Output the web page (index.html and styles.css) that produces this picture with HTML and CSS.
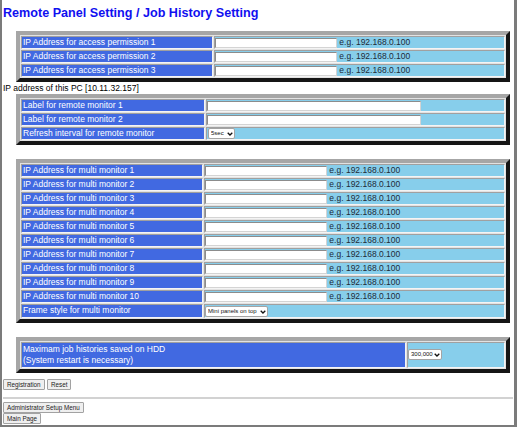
FILE: index.html
```html
<!DOCTYPE html>
<html lang="en">

<head>
    <meta charset="UTF-8">
    <meta name="viewport" content="width=device-width, initial-scale=1.0">
    <title>Remote Panel Setting / Job History Setting</title>
    <link rel="stylesheet" href="styles.css">
</head>

<body>
    <div class="page">
        <h1 class="title">Remote Panel Setting / Job History Setting</h1>

        <form>
            <table class="setting first">
                <tr>
                    <td class="label w1">IP Address for access permission 1</td>
                    <td class="value"><input class="ip" type="text"> e.g. 192.168.0.100</td>
                </tr>
                <tr>
                    <td class="label w1">IP Address for access permission 2</td>
                    <td class="value"><input class="ip" type="text"> e.g. 192.168.0.100</td>
                </tr>
                <tr>
                    <td class="label w1">IP Address for access permission 3</td>
                    <td class="value"><input class="ip" type="text"> e.g. 192.168.0.100</td>
                </tr>
            </table>

            <div class="pcInfo">IP address of this PC [10.11.32.157]</div>

            <table class="setting">
                <tr>
                    <td class="label w2">Label for remote monitor 1</td>
                    <td class="value"><input class="ip wide" type="text"></td>
                </tr>
                <tr>
                    <td class="label w2">Label for remote monitor 2</td>
                    <td class="value"><input class="ip wide" type="text"></td>
                </tr>
                <tr>
                    <td class="label w2">Refresh interval for remote monitor</td>
                    <td class="value">
                        <span class="selWrap secWrap">
                            <select class="sel secSel">
                                <option>5sec</option>
                                <option>10sec</option>
                                <option>30sec</option>
                            </select>
                            <svg class="selArrow" width="6" height="4" viewBox="0 0 6 4"><path d="M0.7 0.7 L3 3 L5.3 0.7" fill="none" stroke="#111" stroke-width="1.3"/></svg>
                        </span>
                    </td>
                </tr>
            </table>

            <table class="setting spaced">
                <tr>
                    <td class="label w3">IP Address for multi monitor 1</td>
                    <td class="value"><input class="ip" type="text"> e.g. 192.168.0.100</td>
                </tr>
                <tr>
                    <td class="label w3">IP Address for multi monitor 2</td>
                    <td class="value"><input class="ip" type="text"> e.g. 192.168.0.100</td>
                </tr>
                <tr>
                    <td class="label w3">IP Address for multi monitor 3</td>
                    <td class="value"><input class="ip" type="text"> e.g. 192.168.0.100</td>
                </tr>
                <tr>
                    <td class="label w3">IP Address for multi monitor 4</td>
                    <td class="value"><input class="ip" type="text"> e.g. 192.168.0.100</td>
                </tr>
                <tr>
                    <td class="label w3">IP Address for multi monitor 5</td>
                    <td class="value"><input class="ip" type="text"> e.g. 192.168.0.100</td>
                </tr>
                <tr>
                    <td class="label w3">IP Address for multi monitor 6</td>
                    <td class="value"><input class="ip" type="text"> e.g. 192.168.0.100</td>
                </tr>
                <tr>
                    <td class="label w3">IP Address for multi monitor 7</td>
                    <td class="value"><input class="ip" type="text"> e.g. 192.168.0.100</td>
                </tr>
                <tr>
                    <td class="label w3">IP Address for multi monitor 8</td>
                    <td class="value"><input class="ip" type="text"> e.g. 192.168.0.100</td>
                </tr>
                <tr>
                    <td class="label w3">IP Address for multi monitor 9</td>
                    <td class="value"><input class="ip" type="text"> e.g. 192.168.0.100</td>
                </tr>
                <tr>
                    <td class="label w3">IP Address for multi monitor 10</td>
                    <td class="value"><input class="ip" type="text"> e.g. 192.168.0.100</td>
                </tr>
                <tr>
                    <td class="label w3">Frame style for multi monitor</td>
                    <td class="value">
                        <span class="selWrap">
                            <select class="sel frameSel">
                                <option>Mini panels on top</option>
                                <option>Mini panels on left</option>
                            </select>
                            <svg class="selArrow" width="6" height="4" viewBox="0 0 6 4"><path d="M0.7 0.7 L3 3 L5.3 0.7" fill="none" stroke="#111" stroke-width="1.3"/></svg>
                        </span>
                    </td>
                </tr>
            </table>

            <table class="setting spaced">
                <tr>
                    <td class="label w4 tall">Maximam job histories saved on HDD<br>(System restart is necessary)</td>
                    <td class="value">
                        <span class="selWrap">
                            <select class="sel histSel">
                                <option>300,000</option>
                                <option>100,000</option>
                            </select>
                            <svg class="selArrow" width="6" height="4" viewBox="0 0 6 4"><path d="M0.7 0.7 L3 3 L5.3 0.7" fill="none" stroke="#111" stroke-width="1.3"/></svg>
                        </span>
                    </td>
                </tr>
            </table>

            <div class="actions">
                <button class="btn" type="button">Registration</button>
                <button class="btn" type="reset">Reset</button>
            </div>
        </form>

        <hr class="rule">

        <div class="nav">
            <button class="btn" type="button">Administrator Setup Menu</button>
        </div>
        <div class="nav">
            <button class="btn" type="button">Main Page</button>
        </div>
    </div>
</body>

</html>
```

FILE: styles.css
```css
* {
    margin: 0;
    padding: 0;
    box-sizing: border-box;
}

html,
body {
    width: 100%;
    height: 100%;
    overflow: hidden;
}

body {
    font-family: "Liberation Sans", Arial, sans-serif;
    font-size: 8.5px;
    color: #000;
    background-color: #fff;
}

.page {
    height: 427px;
    padding: 0 1px;
    border-left: 2px solid #7b7b7b;
    border-right: 3px solid #7b7b7b;
    border-bottom: 2px solid #7b7b7b;
}

.title {
    padding-top: 6px;
    font-size: 12.6px;
    line-height: 14px;
    font-weight: bold;
    color: #1010f0;
}

.setting {
    width: 494px;
    margin-left: 13px;
    border-style: solid;
    border-width: 4px;
    border-color: #a6a6a6 #151515 #151515 #a6a6a6;
    border-spacing: 1px;
    background-color: #e2e2e2;
}

.first {
    margin-top: 11px;
}

.spaced {
    margin-top: 14px;
}

.setting td {
    height: 13px;
    padding: 0 1px;
    line-height: 11px;
    border: 1px solid;
    border-color: #a0a0a0 #f4f4f4 #f4f4f4 #a0a0a0;
    white-space: nowrap;
}

.label {
    background-color: #4169e1;
    color: #fff;
}

.value {
    background-color: #87ceeb;
    color: #1e2b38;
}

.setting td.value {
    padding: 0;
}

.w1 {
    width: 192px;
}

.w2 {
    width: 184px;
}

.w3 {
    width: 182px;
}

.w4 {
    width: 385px;
}

.setting td.tall {
    height: 26px;
    padding: 1px;
    white-space: normal;
}

.pcInfo {
    line-height: 12px;
}

.ip {
    width: 122px;
    height: 10px;
    padding: 0 1px;
    font-size: 7px;
    vertical-align: middle;
    background-color: #fff;
    border: 1px solid;
    border-color: #8c8c8c #d4d4d4 #d4d4d4 #8c8c8c;
}

.wide {
    width: 214px;
}

.selWrap {
    position: relative;
    display: inline-block;
    vertical-align: middle;
    line-height: 0;
}

.secWrap {
    margin-left: 1px;
}

.sel {
    appearance: none;
    -webkit-appearance: none;
    height: 11px;
    padding: 0 8px 0 2px;
    font-family: "Liberation Sans", Arial, sans-serif;
    font-size: 6px;
    line-height: 9px;
    color: #111;
    background-color: #fff;
    border: 1px solid #a4a4a4;
    border-radius: 2px;
}

.selArrow {
    position: absolute;
    top: 4px;
    right: 2px;
}

.secSel {
    width: 27px;
}

.frameSel {
    width: 63px;
}

.histSel {
    width: 34px;
}

.actions {
    margin-top: 6px;
}

.btn {
    height: 11px;
    padding: 0 3px;
    font-family: "Liberation Sans", Arial, sans-serif;
    font-size: 6.3px;
    line-height: 9px;
    color: #222;
    vertical-align: top;
    background-color: #efefef;
    border: 1px solid #a2a2a2;
    border-radius: 1px;
}

.rule {
    margin-top: 7px;
    border: 0;
    border-top: 2px solid #d2d2d2;
}

.nav {
    height: 11px;
}

.nav:first-of-type {
    margin-top: 3px;
}
```
